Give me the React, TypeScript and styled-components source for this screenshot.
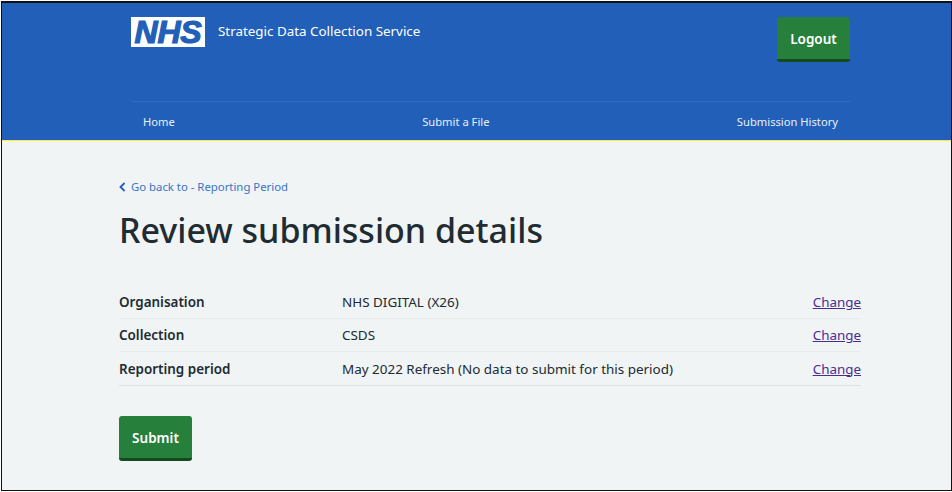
import React from "react";
import styled, { createGlobalStyle } from "styled-components";

const Global = createGlobalStyle`
  html, body { margin: 0; padding: 0; background: #fff; }
  body { font-family: "Noto Sans", "Open Sans", "Liberation Sans", sans-serif; }
  * { box-sizing: border-box; }
`;

const Frame = styled.div`
  width: 951px;
  height: 490px;
  margin: 1px 0 0 1px;
  border: 1px solid #111;
  border-top-width: 2px;
  background: #f0f4f5;
  overflow: hidden;
`;

const Header = styled.header`
  height: 138px;
  background: #225fb9;
  border-bottom: 1px solid #ffeb3b;
  padding: 14px 101px 0 129px;
  display: flex;
  flex-direction: column;
`;

const TopRow = styled.div`
  display: flex;
  justify-content: space-between;
  align-items: flex-start;
  height: 84px;
`;

const Brand = styled.div`
  display: flex;
  align-items: flex-start;
  gap: 13px;
`;

const Logo = styled.div`
  width: 74px;
  height: 30px;
  background: #fff;
  color: #225fb9;
  font: italic 700 32px/30px "Liberation Sans", Arial, sans-serif;
  letter-spacing: -0.2px;
  -webkit-text-stroke: 1.2px #225fb9;
  text-align: center;
`;

const ServiceName = styled.span`
  color: #fff;
  font-size: 13.4px;
  line-height: 20px;
  margin-top: 4px;
`;

const Button = styled.button`
  display: block;
  width: 73px;
  height: 45px;
  background: #267f3b;
  color: #fff;
  border: 0;
  border-bottom: 3px solid #134a20;
  border-radius: 3px;
  font-family: inherit;
  font-size: 13.5px;
  font-weight: 600;
  padding: 1px 0 0;
`;

const Nav = styled.nav`
  border-top: 1px solid #2f6ac4;
  height: 38px;
  display: flex;
  justify-content: space-between;
  align-items: center;
  padding: 2px 12px 0;
`;

const NavLink = styled.a`
  color: #e8f0fa;
  font-size: 11.2px;
  line-height: 16px;
`;

const Main = styled.main`
  padding: 38px 90px 0 117px;
`;

const BackLink = styled.a`
  display: flex;
  align-items: center;
  gap: 5px;
  color: #3a75c4;
  font-size: 11.35px;
  line-height: 16px;
`;

const Title = styled.h1`
  margin: 12px 0 33px;
  font-size: 34px;
  line-height: 46px;
  font-weight: 500;
  color: #212b32;
`;

const Row = styled.div<{ $h: number; $last?: boolean }>`
  display: grid;
  grid-template-columns: 223px 1fr auto;
  align-items: center;
  height: ${(p) => p.$h}px;
  border-bottom: 1px solid ${(p) => (p.$last ? "#dde1e4" : "#e6eaec")};
  font-size: 13.45px;
  color: #212b32;
`;

const Key = styled.span`
  font-weight: 600;
`;

const Value = styled.span``;

const ChangeLink = styled.a`
  color: #4c2c92;
  text-decoration: underline;
  font-size: 13.4px;
`;

const Actions = styled.div`
  margin-top: 30px;
`;

const rows = [
  { k: "Organisation", v: "NHS DIGITAL (X26)", h: 33 },
  { k: "Collection", v: "CSDS", h: 33 },
  { k: "Reporting period", v: "May 2022 Refresh (No data to submit for this period)", h: 34 },
];

export default function App() {
  return (
    <>
      <Global />
      <Frame>
        <Header>
          <TopRow>
            <Brand>
              <Logo>NHS</Logo>
              <ServiceName>Strategic Data Collection Service</ServiceName>
            </Brand>
            <Button>Logout</Button>
          </TopRow>
          <Nav>
            <NavLink>Home</NavLink>
            <NavLink>Submit a File</NavLink>
            <NavLink>Submission History</NavLink>
          </Nav>
        </Header>
        <Main>
          <BackLink>
            <svg width="7" height="11" viewBox="0 0 7 11" fill="none">
              <path d="M5.6 1 1.5 5 5.6 9" stroke="#225fb9" strokeWidth="1.8" />
            </svg>
            Go back to - Reporting Period
          </BackLink>
          <Title>Review submission details</Title>
          {rows.map((r, i) => (
            <Row key={r.k} $h={r.h} $last={i === 2}>
              <Key>{r.k}</Key>
              <Value>{r.v}</Value>
              <ChangeLink>Change</ChangeLink>
            </Row>
          ))}
          <Actions>
            <Button>Submit</Button>
          </Actions>
        </Main>
      </Frame>
    </>
  );
}
